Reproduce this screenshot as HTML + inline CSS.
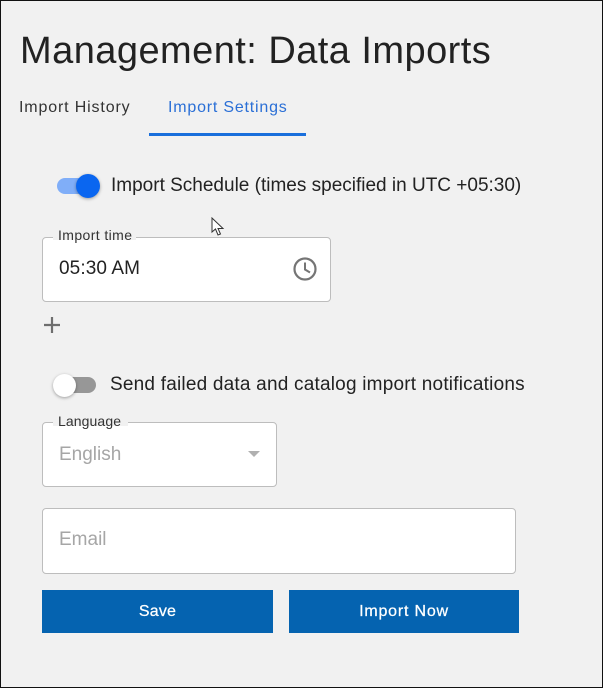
<!DOCTYPE html>
<html>
<head>
<meta charset="utf-8">
<style>
html,body{margin:0;padding:0;width:603px;height:688px;overflow:hidden;background:#f1f1f1;}
body{position:relative;font-family:"Liberation Sans",sans-serif;color:#212121;}
.a{position:absolute;white-space:nowrap;}
.box{position:absolute;background:#fff;border:1px solid #bdbdbd;border-radius:4px;box-sizing:border-box;}
.btn{position:absolute;background:#0563b0;color:#fff;font-size:16px;text-align:center;height:43px;line-height:43px;top:590px;-webkit-text-stroke:.25px #fff;}
.frame{position:absolute;left:0;top:0;width:603px;height:688px;box-sizing:border-box;border:1px solid #111;pointer-events:none;}
</style>
</head>
<body>
<div class="a" style="left:20px;top:29px;font-size:38px;line-height:44px;color:#222;letter-spacing:.45px">Management: Data Imports</div>
<div class="a" style="left:19px;top:98px;font-size:16px;line-height:20px;letter-spacing:.85px;color:#333">Import History</div>
<div class="a" style="left:168px;top:98px;font-size:16px;line-height:20px;letter-spacing:.8px;color:#2a6fd6">Import Settings</div>
<div class="a" style="left:149px;top:133px;width:157px;height:3px;background:#1a6fdc"></div>

<div class="a" style="left:57px;top:178px;width:38px;height:16px;border-radius:8px;background:#80aef8"></div>
<div class="a" style="left:76px;top:174px;width:24px;height:24px;border-radius:50%;background:#0a66f0;box-shadow:0 1px 3px rgba(0,0,0,.35)"></div>
<div class="a" style="left:111px;top:174px;font-size:19px;line-height:23px;color:#222">Import Schedule (times specified in UTC +05:30)</div>

<svg class="a" style="left:211px;top:217px" width="14" height="20" viewBox="0 0 14 20"><path d="M1 1 L1 15 L4.5 12 L7 18 L9.5 17 L7 11.5 L12 11.5 Z" fill="#fff" stroke="#333" stroke-width="1"/></svg>

<div class="box" style="left:42px;top:237px;width:289px;height:65px"></div>
<div class="a" style="left:53px;top:232px;width:83px;height:8px;background:#f1f1f1"></div>
<div class="a" style="left:58px;top:227px;font-size:14px;line-height:17px;color:#333;letter-spacing:.4px">Import time</div>
<div class="a" style="left:59px;top:257px;font-size:19px;line-height:23px;color:#222;letter-spacing:.1px">05:30 AM</div>
<svg class="a" style="left:292px;top:256px" width="26" height="26" viewBox="0 0 26 26"><circle cx="13" cy="13" r="10.5" fill="none" stroke="#757575" stroke-width="2.2"/><path d="M13 6.5V13.5L18 16.5" fill="none" stroke="#757575" stroke-width="2"/></svg>
<svg class="a" style="left:43px;top:316px" width="18" height="18" viewBox="0 0 18 18"><path d="M9 1V17M1 9H17" stroke="#6e6e6e" stroke-width="2.2" fill="none"/></svg>

<div class="a" style="left:57px;top:377px;width:39px;height:16px;border-radius:8px;background:#979797"></div>
<div class="a" style="left:53px;top:374px;width:23px;height:23px;border-radius:50%;background:#fff;box-shadow:0 1px 3px rgba(0,0,0,.35)"></div>
<div class="a" style="left:110px;top:373px;font-size:19px;line-height:23px;color:#222;letter-spacing:.21px">Send failed data and catalog import notifications</div>

<div class="box" style="left:42px;top:422px;width:235px;height:65px"></div>
<div class="a" style="left:53px;top:418px;width:75px;height:8px;background:#f1f1f1"></div>
<div class="a" style="left:58px;top:413px;font-size:14px;line-height:17px;color:#333;letter-spacing:.1px">Language</div>
<div class="a" style="left:59px;top:443px;font-size:19px;line-height:23px;color:#a6a6a6">English</div>
<div class="a" style="left:248px;top:451px;width:0;height:0;border-left:6px solid transparent;border-right:6px solid transparent;border-top:6px solid #b0b0b0"></div>

<div class="box" style="left:42px;top:508px;width:474px;height:66px"></div>
<div class="a" style="left:59px;top:528px;font-size:19px;line-height:23px;color:#a6a6a6">Email</div>

<div class="btn" style="left:42px;width:231px;letter-spacing:.2px">Save</div>
<div class="btn" style="left:289px;width:230px;letter-spacing:.8px">Import Now</div>

<div class="frame"></div>
</body>
</html>
